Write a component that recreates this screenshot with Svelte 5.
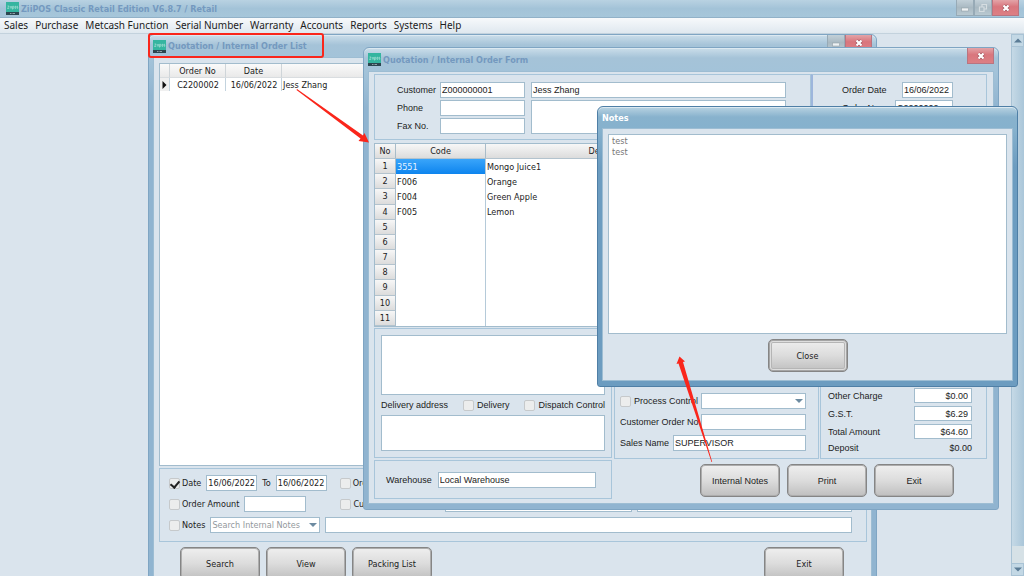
<script lang="ts">
  type OrderLine = { code: string; description: string };

  const menus = [
    "Sales",
    "Purchase",
    "Metcash Function",
    "Serial Number",
    "Warranty",
    "Accounts",
    "Reports",
    "Systems",
    "Help",
  ];

  const lines: OrderLine[] = [
    { code: "3551", description: "Mongo Juice1" },
    { code: "F006", description: "Orange" },
    { code: "F004", description: "Green Apple" },
    { code: "F005", description: "Lemon" },
  ];

  const row_count = 11;
  const rows = Array.from({ length: row_count }, (_, i) => lines[i] ?? null);

  let selected_row = $state(0);
  let filter_date = $state(true);
  let notes = $state("test\ntest");
</script>

{#snippet logo()}
  <svg class="logo" viewBox="0 0 13 13" aria-hidden="true">
    <rect width="13" height="10" fill="#35b5a0" />
    <rect y="10" width="13" height="3" fill="#2c4650" />
    <path
      d="M1.500 4h1.600l-1.600 2.500h1.600M4.300 4v2.500M5.400 4v2.500M6.500 7.500V4.300h1.300v2H6.500M9 4.300h1v2H9zM12 4.300h-.9v1h.8v1h-.9"
      fill="none"
      stroke="#b5e6dc"
      stroke-width="0.600"
    />
    <path d="M4 11.500h1m.5 0h1m.5 0h2" stroke="#a9b9bf" stroke-width="0.800" />
  </svg>
{/snippet}

{#snippet caption_button(kind: string)}
  <button class="caption caption--{kind}" aria-label={kind}>
    <svg viewBox="0 0 12 10" aria-hidden="true">
      {#if kind === "close"}
        <path d="M3.500 2.500l5 5M8.500 2.500l-5 5" stroke="#a35560" stroke-width="3.600" />
        <path d="M3.500 2.500l5 5M8.500 2.500l-5 5" stroke="#fff" stroke-width="2.200" />
      {:else if kind === "minimise"}
        <rect x="2.500" y="5" width="7" height="3" fill="#eef2f4" stroke="#93a1a9" stroke-width="0.600" />
      {:else}
        <path
          d="M5 3.500V1.500h4.500V6H7.500M2.500 4h4.500v4.500H2.500z"
          fill="none"
          stroke="#d5dde1"
          stroke-width="1.200"
        />
      {/if}
    </svg>
  </button>
{/snippet}

<div class="app">
  <header class="titlebar titlebar--app">
    {@render logo()}
    <span class="title">ZiiPOS Classic Retail Edition V6.8.7 / Retail</span>
    <div class="captions">
      {@render caption_button("minimise")}
      {@render caption_button("restore")}
      {@render caption_button("close")}
    </div>
  </header>

  <nav class="menu">
    {#each menus as item (item)}
      <button class="menu__item">{item}</button>
    {/each}
  </nav>

  <main class="desktop">
    <div class="scrollbar">
      <button class="scrollbar__arrow" aria-label="Scroll up">
        <svg viewBox="0 0 8 5"><path d="M0 4.500L4 .5l4 4z" fill="#5b7c96" /></svg>
      </button>
      <div class="scrollbar__thumb"></div>
      <div class="scrollbar__track"></div>
      <button class="scrollbar__arrow" aria-label="Scroll down">
        <svg viewBox="0 0 8 5"><path d="M0 .5L4 4.500l4-4z" fill="#5b7c96" /></svg>
      </button>
    </div>

    <section class="window window--list">
      <header class="titlebar">
        {@render logo()}
        <h2 class="title">Quotation / Internal Order List</h2>
        <div class="captions">
          {@render caption_button("minimise")}
          {@render caption_button("close")}
        </div>
      </header>
      <div class="client list">
        <div class="list__grid">
          <table class="orders">
            <colgroup>
              <col class="orders__mark" />
              <col class="orders__col" />
              <col class="orders__col" />
              <col />
            </colgroup>
            <thead>
              <tr><th></th><th>Order No</th><th>Date</th><th></th></tr>
            </thead>
            <tbody>
              <tr>
                <td class="orders__pointer">
                  <svg viewBox="0 0 5 8"><path d="M.5 0L4.500 4l-4 4z" fill="#111" /></svg>
                </td>
                <td class="center">C2200002</td>
                <td class="center">16/06/2022</td>
                <td>Jess Zhang</td>
              </tr>
            </tbody>
          </table>
        </div>

        <form class="panel filters">
          <div class="filters__row">
            <label class="check"><input type="checkbox" bind:checked={filter_date} />Date</label>
            <input class="filters__date" aria-label="From date" value="16/06/2022" />
            <label for="date-to">To</label>
            <input id="date-to" class="filters__date" value="16/06/2022" />
            <label class="check filters__second"><input type="checkbox" />Order No</label>
          </div>
          <div class="filters__row">
            <label class="check"><input type="checkbox" />Order Amount</label>
            <input class="filters__amount" aria-label="Order amount" />
            <label class="check filters__second"><input type="checkbox" />Customer</label>
            <input class="filters__customer" aria-label="Customer code" />
            <input class="filters__name" aria-label="Customer name" />
          </div>
          <div class="filters__row">
            <label class="check"><input type="checkbox" />Notes</label>
            <span class="dropdown filters__scope">
              <select aria-label="Notes scope"><option>Search Internal Notes</option></select>
            </span>
            <input class="filters__text" aria-label="Notes text" />
          </div>
        </form>

        <div class="list__actions">
          <button class="button">Search</button>
          <button class="button">View</button>
          <button class="button">Packing List</button>
          <button class="button list__exit">Exit</button>
        </div>
      </div>
    </section>

    <section class="window window--form">
      <header class="titlebar">
        {@render logo()}
        <h2 class="title">Quotation / Internal Order Form</h2>
        <div class="captions">{@render caption_button("close")}</div>
      </header>
      <div class="client form">
        <div class="form__head">
          <div class="panel customer">
            <div class="customer__fields">
              <label for="customer">Customer</label>
              <input id="customer" value="Z000000001" />
              <label for="phone">Phone</label>
              <input id="phone" />
              <label for="fax">Fax No.</label>
              <input id="fax" />
            </div>
            <div class="customer__about">
              <input aria-label="Customer name" value="Jess Zhang" />
              <textarea aria-label="Customer address"></textarea>
            </div>
          </div>
          <div class="panel order">
            <div class="order__row">
              <label for="order-date">Order Date</label>
              <input id="order-date" class="order__date" value="16/06/2022" />
            </div>
            <div class="order__row">
              <label for="order-no">Order No.</label>
              <input id="order-no" class="order__no" value="C2200002" />
            </div>
          </div>
        </div>

        <table class="items">
          <colgroup>
            <col class="items__no" />
            <col class="items__code" />
            <col class="items__desc" />
            <col />
          </colgroup>
          <thead>
            <tr><th>No</th><th>Code</th><th>Description</th><th>Qty</th></tr>
          </thead>
          <tbody>
            {#each rows as row, i}
              <tr onclick={() => (selected_row = i)}>
                <th>{i + 1}</th>
                <td class:selected={selected_row === i}>{row?.code ?? ""}</td>
                <td>{row?.description ?? ""}</td>
                <td></td>
              </tr>
            {/each}
          </tbody>
        </table>

        <div class="form__foot">
          <div class="form__left">
            <div class="panel delivery">
              <textarea class="delivery__memo" aria-label="Memo"></textarea>
              <div class="delivery__options">
                <label for="address">Delivery address</label>
                <label class="check"><input type="checkbox" />Delivery</label>
                <label class="check"><input type="checkbox" />Dispatch Control</label>
              </div>
              <textarea id="address" class="delivery__address"></textarea>
            </div>
            <div class="panel warehouse">
              <label for="warehouse">Warehouse</label>
              <input id="warehouse" value="Local Warehouse" />
            </div>
          </div>

          <div class="form__right">
            <div class="form__panels">
              <div class="panel process">
                <div class="process__row">
                  <label class="check"><input type="checkbox" />Process Control</label>
                  <span class="dropdown">
                    <select aria-label="Process control"><option></option></select>
                  </span>
                </div>
                <div class="process__row">
                  <label for="customer-order">Customer Order No.</label>
                  <input id="customer-order" />
                </div>
                <div class="process__row">
                  <label for="sales-name">Sales Name</label>
                  <input id="sales-name" class="process__wide" value="SUPERVISOR" />
                </div>
              </div>
              <div class="panel totals">
                <label for="other">Other Charge</label>
                <input id="other" value="$0.00" />
                <label for="gst">G.S.T.</label>
                <input id="gst" value="$6.29" />
                <label for="total">Total Amount</label>
                <input id="total" value="$64.60" />
                <span>Deposit</span>
                <output>$0.00</output>
              </div>
            </div>
            <div class="form__actions">
              <button class="button">Internal Notes</button>
              <button class="button">Print</button>
              <button class="button">Exit</button>
            </div>
          </div>
        </div>
      </div>
    </section>

    <section class="window window--notes">
      <header class="titlebar">
        <h2 class="title">Notes</h2>
      </header>
      <div class="client notes">
        <textarea aria-label="Notes" bind:value={notes}></textarea>
        <button class="button button--focus">Close</button>
      </div>
    </section>
  </main>

  <svg class="marks" width="1024" height="576" aria-hidden="true">
    <rect x="149" y="34" width="174" height="23" rx="2" fill="none" stroke="#fa261b" stroke-width="2" />
    <path d="M297 89L363 135.500L364.500 133L369 142.500L358.500 141L360.500 138.500L296.500 90z" fill="#fa261b" />
    <path d="M711.500 462L678.500 363.500L676.500 364L679.500 356.500L685 361.500L683 362L712.200 462z" fill="#fa261b" />
  </svg>
</div>

<style>
  :global(body) {
    overflow: hidden;
  }

  .app {
    --face: #dae4ed;
    --line: #a8c5da;
    --field: #a2bccd;
    --tahoma: "DejaVu Sans Condensed", "DejaVu Sans", sans-serif;
    --system: "Liberation Sans", sans-serif;
    position: relative;
    display: flex;
    flex-direction: column;
    height: 100vh;
    overflow: hidden;
    background: var(--face);
    color: #1c1c1c;
    font: 9px/12px var(--tahoma);
  }

  .app :global(*) {
    box-sizing: border-box;
  }

  button,
  input,
  select,
  textarea {
    margin: 0;
    font: inherit;
    color: inherit;
  }

  .titlebar {
    display: flex;
    align-items: center;
    gap: 2px;
    height: 23px;
    color: #7499bf;
  }

  .titlebar--app {
    height: 18px;
    padding: 0 5px 0 6px;
    background: linear-gradient(#b9d2e2, #a3c3d8 50%, #a6c6da);
    border-bottom: 1px solid #91b1c8;
  }

  .title {
    margin: 0;
    font-size: 9px;
    font-weight: bold;
    line-height: 12px;
  }

  .logo {
    width: 13px;
    height: 13px;
  }

  .captions {
    display: flex;
    align-self: flex-start;
    margin-left: auto;
  }

  .caption {
    display: grid;
    place-items: center;
    width: 18px;
    height: 16px;
    padding: 0;
    border: 1px solid #97aab6;
    border-top: 0;
    background: linear-gradient(#c2d0d8, #a9b9c2 50%, #b9c9d1);
  }

  .caption svg {
    width: 12px;
    height: 10px;
  }

  .caption--close {
    width: 27px;
    border-color: #b97480;
    background: linear-gradient(#e3a4a8, #d9767d 45%, #dd7f84);
  }

  .menu {
    display: flex;
    height: 16px;
    padding: 0 4px;
    gap: 7px;
    background: linear-gradient(#f7f9fb, #dfe8ef);
    border-bottom: 1px solid #c3d2dd;
  }

  .menu__item {
    padding: 0;
    border: 0;
    background: none;
    font: 10px/15px "Noto Sans", "Open Sans", sans-serif;
    white-space: nowrap;
  }

  .desktop {
    position: relative;
    flex: 1;
    display: flex;
    justify-content: flex-end;
    min-height: 0;
  }

  .scrollbar {
    display: flex;
    flex-direction: column;
    width: 13px;
    border-left: 1px solid #a9c3d5;
  }

  .scrollbar__arrow {
    display: grid;
    place-items: center;
    height: 13px;
    padding: 0;
    border: 1px solid #a9c3d5;
    border-left: 0;
    background: #c3d8e5;
  }

  .scrollbar__arrow svg {
    width: 8px;
    height: 5px;
  }

  .scrollbar__thumb {
    flex: 1;
    background: linear-gradient(90deg, #c5d9e6, #aac6d9);
  }

  .scrollbar__track {
    height: 17px;
    background: #d6e1e6;
  }

  .window {
    position: absolute;
    padding: 0 4px 5px;
    border: 1px solid #7fa5c3;
    border-radius: 6px 6px 3px 3px;
    background: linear-gradient(#cbdeea, #a5c3d8 10px, #a3c3d9 24px, #90b4d0 60px);
    box-shadow: inset 0 1px #dce9f1;
  }

  .window--list {
    left: 148px;
    top: 0;
    width: 729px;
  }

  .window--list .titlebar {
    height: 22px;
  }

  .window--form {
    left: 363px;
    top: 13px;
    width: 636px;
    font-family: var(--system);
  }

  .window--form .title {
    font-family: var(--tahoma);
  }

  .window--notes {
    left: 597px;
    top: 72px;
    width: 421px;
    border-color: #4f7fa6;
    background: linear-gradient(#b9d3e2, #88b2cd 10px, #86b1cd 22px, #6c9cc0 60px);
  }

  .window--notes .titlebar {
    height: 21px;
    color: #fff;
  }

  .client {
    border: 1px solid #9dbdd3;
    background: var(--face);
  }

  .panel {
    border: 1px solid var(--line);
  }

  input,
  select,
  textarea {
    display: block;
    min-width: 0;
    height: 16px;
    padding: 0 1px;
    border: 1px solid var(--field);
    border-radius: 0;
    background: #fff;
    outline: 0;
    resize: none;
  }

  label {
    white-space: nowrap;
  }

  .check {
    display: flex;
    align-items: center;
    gap: 3px;
  }

  .check input {
    appearance: none;
    flex: none;
    width: 11px;
    height: 11px;
    padding: 0;
    border: 1px solid #c6c9cb;
    border-radius: 2px;
    background: #eceded;
  }

  .check input:checked::after {
    content: "";
    display: block;
    width: 4px;
    height: 7px;
    margin: 0 0 0 2px;
    border: solid #222;
    border-width: 0 2px 2px 0;
    transform: rotate(40deg);
  }

  .dropdown {
    position: relative;
    display: block;
  }

  .dropdown select {
    appearance: none;
    width: 100%;
  }

  .dropdown::after {
    content: "";
    position: absolute;
    top: 6px;
    right: 3px;
    border: 4px solid transparent;
    border-top-color: #6d8ba1;
    border-bottom: 0;
    pointer-events: none;
  }

  .button {
    width: 80px;
    height: 33px;
    padding: 0;
    border: 1px solid #858585;
    border-radius: 5px;
    background: linear-gradient(#efefef, #dcdcdc 50%, #bfbfbf);
    box-shadow: inset 0 0 0 1px #adadad;
    text-align: center;
  }

  .button--focus {
    box-shadow: inset 0 0 0 1px #a5a5a5, inset 0 0 0 2px #dedede, inset 0 0 0 3px #b5b5b5;
  }

  table {
    border-collapse: separate;
    border-spacing: 0;
    table-layout: fixed;
    width: 100%;
    background: #fff;
  }

  th,
  td {
    padding: 0;
    font-weight: normal;
    text-align: left;
    white-space: nowrap;
  }

  thead th {
    text-align: center;
  }

  .list {
    padding: 5px 4px 8px 5px;
  }

  .list__grid {
    height: 403px;
    border: 1px solid var(--field);
    background: #fff;
  }

  .orders th {
    height: 14px;
    border-right: 1px solid #cfd5d9;
    border-bottom: 1px solid #d9dde0;
    background: linear-gradient(#fafafa, #e9e9e9);
  }

  .orders td {
    height: 13px;
    padding-left: 1px;
    border-right: 1px solid #c3d3de;
  }

  .orders td.center {
    text-align: center;
  }

  .orders td.orders__pointer {
    padding-left: 2px;
    background: #f0f0f0;
  }

  .orders td:last-child {
    border-right: 0;
  }

  .orders__pointer svg {
    display: block;
    width: 5px;
    height: 8px;
  }

  .orders__mark {
    width: 10px;
  }

  .orders__col {
    width: 56px;
  }

  .filters {
    display: flex;
    flex-direction: column;
    gap: 5px;
    margin-top: 2px;
    padding: 6px 14px 8px 9px;
  }

  .filters__row {
    display: flex;
    align-items: center;
    gap: 5px;
  }

  .filters__row .check {
    gap: 2px;
  }

  .filters__date {
    width: 51px;
  }

  .filters__second {
    width: 100px;
    margin-left: 8px;
  }

  .filters__amount {
    width: 62px;
    margin-right: 21px;
  }

  .filters__customer {
    width: 187px;
  }

  .filters__name {
    flex: 1;
  }

  .filters__scope {
    width: 110px;
    color: #93999d;
  }

  .filters__text {
    flex: 1;
  }

  .list__actions {
    display: flex;
    gap: 6px;
    margin-top: 5px;
    padding: 0 23px 0 21px;
  }

  .list__exit {
    margin-left: auto;
  }

  .form {
    padding: 2px 6px 4px 5px;
  }

  .form__head {
    display: flex;
  }

  .customer {
    display: flex;
    flex: 1;
    gap: 6px;
    padding: 7px 24px 5px 22px;
  }

  .customer__fields {
    display: grid;
    grid-template-columns: 43px 85px;
    gap: 2px 0;
    align-items: center;
  }

  .customer__about {
    display: flex;
    flex: 1;
    flex-direction: column;
    gap: 2px;
  }

  .customer__about textarea {
    flex: 1;
  }

  .order {
    width: 176px;
    padding: 7px 33px 5px 29px;
    border-left: 2px solid #9db6dc;
  }

  .order__row {
    display: flex;
    align-items: center;
    justify-content: space-between;
    margin-bottom: 2px;
  }

  .order__date {
    width: 51px;
  }

  .order__no {
    width: 58px;
  }

  .items {
    height: 184px;
    margin-top: 3px;
    border: 1px solid var(--field);
    font-family: var(--tahoma);
  }

  .items th {
    border-right: 1px solid #a9bcc9;
    border-bottom: 1px solid #b3c3ce;
    background: linear-gradient(#f7f7f7, #dcdcdc);
    text-align: center;
  }

  .items thead th {
    height: 15px;
  }

  .items td {
    padding-left: 1px;
    border-right: 1px solid #b5cad9;
  }

  .items td.selected {
    background: linear-gradient(#3aa5fa, #0d84ee);
    color: #e6f3ff;
  }

  .items__no {
    width: 21px;
  }

  .items__code {
    width: 90px;
  }

  .items__desc {
    width: 252px;
  }

  .form__foot {
    display: flex;
    gap: 2px;
    margin-top: 1px;
  }

  .form__left {
    flex: none;
    width: 238px;
  }

  .form__right {
    display: flex;
    flex: 1;
    flex-direction: column;
    min-width: 0;
  }

  .delivery {
    padding: 6px;
  }

  .delivery textarea {
    width: 100%;
  }

  .delivery__memo {
    height: 60px;
  }

  .delivery__options {
    display: flex;
    justify-content: space-between;
    padding: 4px 0;
  }

  .delivery__address {
    height: 36px;
  }

  .warehouse {
    display: flex;
    align-items: center;
    gap: 6px;
    height: 39px;
    margin-top: 2px;
    padding: 0 15px 0 11px;
  }

  .warehouse input {
    flex: 1;
  }

  .form__panels {
    display: flex;
    gap: 1px;
    height: 131px;
  }

  .process {
    display: flex;
    flex: 1;
    flex-direction: column;
    justify-content: flex-end;
    gap: 5px;
    min-width: 0;
    padding: 7px 12px 7px 5px;
  }

  .process__row {
    display: flex;
    align-items: center;
    justify-content: space-between;
  }

  .process__row > input,
  .process__row > .dropdown {
    flex: none;
    width: 105px;
  }

  .process__row > .process__wide {
    width: 133px;
  }

  .totals {
    display: grid;
    flex: none;
    grid-template-columns: 1fr 58px;
    align-content: end;
    align-items: center;
    gap: 3px 0;
    width: 167px;
    padding: 4px 14px 4px 7px;
  }

  .totals input {
    height: 15px;
    width: 100%;
    padding: 0 3px;
    text-align: right;
  }

  .totals output {
    text-align: right;
  }

  .form__actions {
    display: flex;
    gap: 7px;
    justify-content: flex-end;
    padding: 5px 33px 0 0;
  }

  .notes {
    display: flex;
    flex-direction: column;
    align-items: center;
    gap: 5px;
    padding: 5px 5px 8px;
  }

  .notes textarea {
    width: 100%;
    height: 200px;
    padding: 1px 3px;
    color: #777;
    line-height: 11px;
  }

  .marks {
    position: absolute;
    inset: 0;
    pointer-events: none;
  }
</style>
